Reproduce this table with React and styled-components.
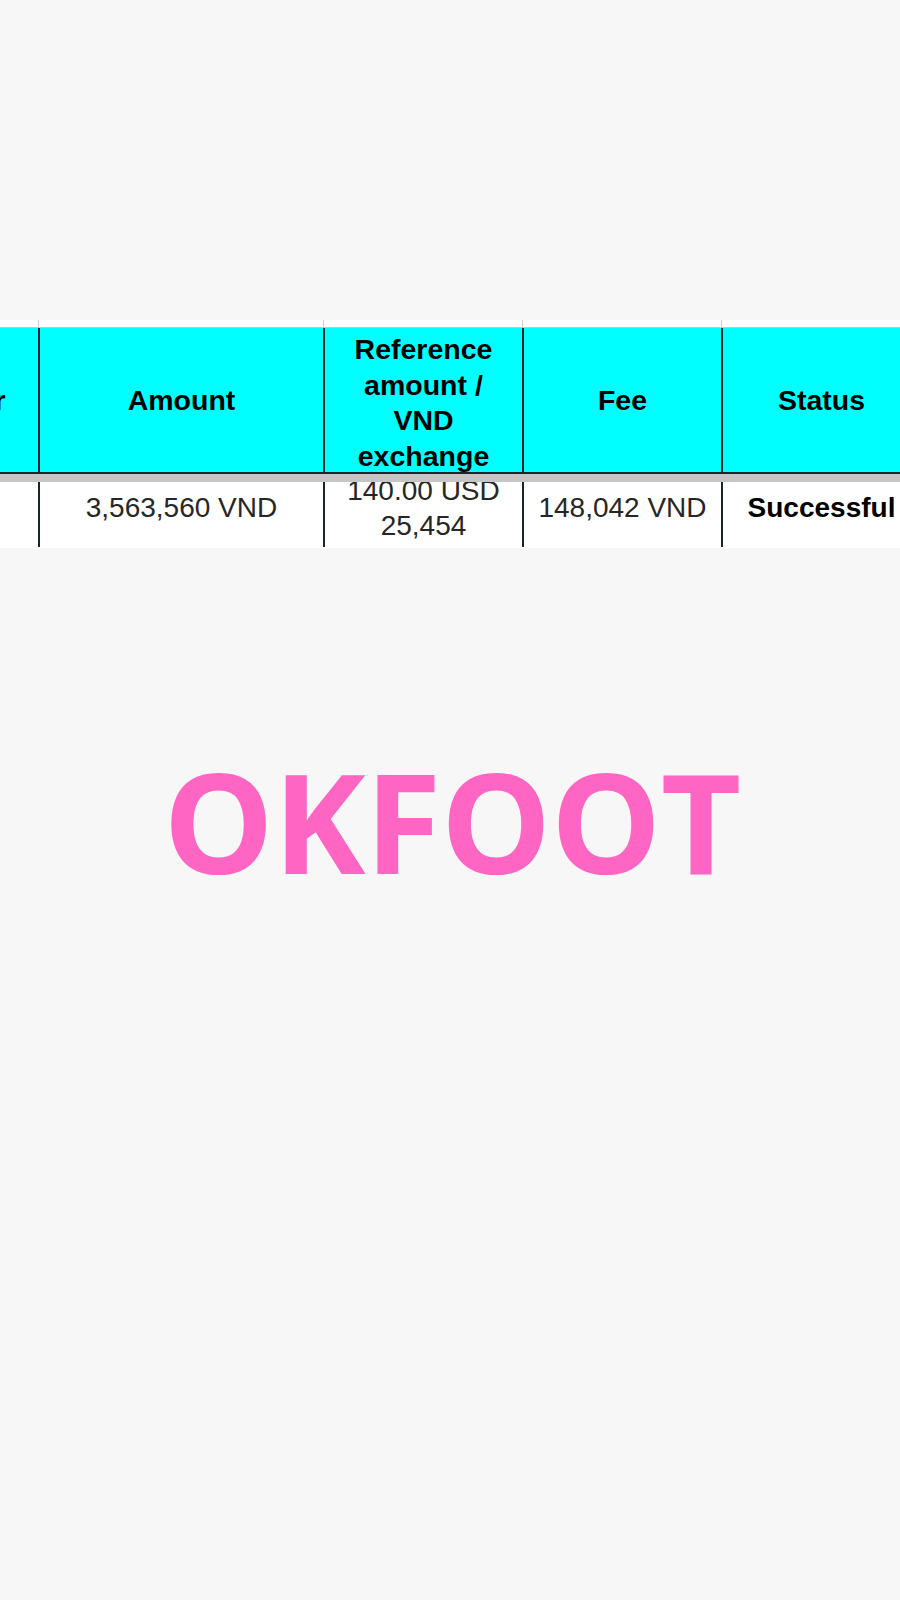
import React from "react";
import styled, { createGlobalStyle } from "styled-components";

const GlobalStyle = createGlobalStyle`
  html, body {
    margin: 0;
    padding: 0;
    background: #f7f7f7;
  }
`;

const COLUMNS = "200px 285px 199px 199px 199px";

const Page = styled.div`
  padding-top: 320px;
  min-height: 1600px;
  box-sizing: border-box;
`;

const Shot = styled.div`
  width: 900px;
  overflow: hidden;
  background: #ffffff;
  padding-bottom: 1px;
`;

const Row = styled.div`
  display: grid;
  grid-template-columns: ${COLUMNS};
  margin-left: -160px;
  width: 1082px;
`;

const TickRow = styled(Row)`
  height: 7px;
  border-bottom: 1px solid #c4c4c4;
`;

const Tick = styled.div`
  border-right: 1px solid #cdcdcd;
  margin-right: 1px;
`;

const HeadRow = styled(Row)`
  height: 144px;
  background: #00ffff;
  border-bottom: 2px solid #1b2428;
`;

const HeadCell = styled.div`
  display: flex;
  justify-content: center;
  align-items: ${(p) => (p.$stack ? "flex-start" : "center")};
  padding-top: ${(p) => (p.$stack ? "4px" : "0")};
  border-right: 2px solid #1b2428;
  box-sizing: border-box;
  font-family: "Liberation Sans", Arial, sans-serif;
  font-weight: 700;
  font-size: 28.5px;
  line-height: 35.5px;
  text-align: center;
  color: #000;
`;

const FreezeBar = styled.div`
  height: 8px;
  background: #c6c6c6;
`;

const DataRow = styled(Row)`
  height: 65px;
`;

const DataCell = styled.div`
  display: flex;
  justify-content: center;
  align-items: center;
  padding-bottom: 13px;
  overflow: hidden;
  border-right: 2px solid #1b2428;
  box-sizing: border-box;
  font-family: "Liberation Sans", Arial, sans-serif;
  font-weight: ${(p) => (p.$strong ? 700 : 400)};
  font-size: 28px;
  line-height: 35.5px;
  text-align: center;
  color: ${(p) => (p.$strong ? "#000" : "#262626")};
  white-space: nowrap;
`;

const Brand = styled.h1`
  margin: 203px 0 0;
  text-align: center;
  font-family: "Open Sans", sans-serif;
  font-weight: 700;
  font-size: 139px;
  line-height: 1;
  letter-spacing: -0.6px;
  color: #ff66c4;
  padding-left: 4px;
`;

const headers = [
  { label: "Customer" },
  { label: "Amount" },
  { label: ["Reference", "amount /", "VND", "exchange"], stack: true },
  { label: "Fee" },
  { label: "Status" },
];

const values = [
  { text: "" },
  { text: "3,563,560 VND" },
  { text: ["140.00 USD", "25,454"] },
  { text: "148,042 VND" },
  { text: "Successful", strong: true },
];

const lines = (v) =>
  Array.isArray(v) ? v.map((l, i) => <div key={i}>{l}</div>) : v;

export default function App() {
  return (
    <Page>
      <GlobalStyle />
      <Shot>
        <TickRow>
          {headers.map((h, i) => (
            <Tick key={i} />
          ))}
        </TickRow>
        <HeadRow>
          {headers.map((h, i) => (
            <HeadCell key={i} $stack={h.stack}>
              <div>{lines(h.label)}</div>
            </HeadCell>
          ))}
        </HeadRow>
        <FreezeBar />
        <DataRow>
          {values.map((v, i) => (
            <DataCell key={i} $strong={v.strong}>
              <div>{lines(v.text)}</div>
            </DataCell>
          ))}
        </DataRow>
      </Shot>
      <Brand>OKFOOT</Brand>
    </Page>
  );
}
